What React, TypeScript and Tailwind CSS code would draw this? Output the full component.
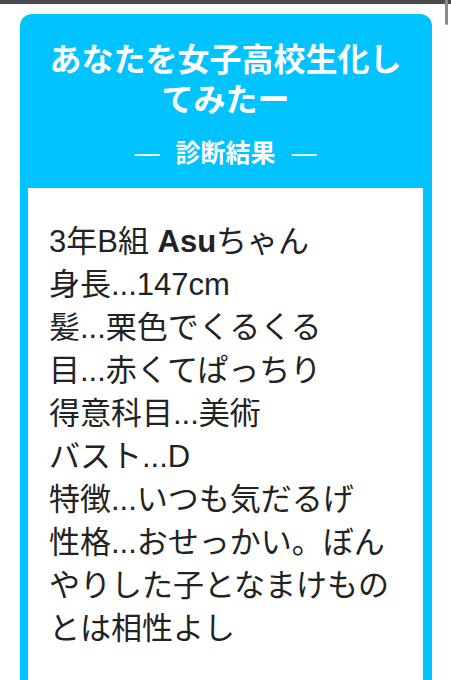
import React from "react"

const lines: React.ReactNode[] = [
  <>3年B組 <span className="font-bold">Asu</span>ちゃん</>,
  "身長...147cm",
  "髪...栗色でくるくる",
  "目...赤くてぱっちり",
  "得意科目...美術",
  "バスト...D",
  "特徴...いつも気だるげ",
  "性格...おせっかい。ぼんやりした子となまけものとは相性よし",
]

export default function App() {
  return (
    <div className="relative min-h-[680px] bg-white overflow-hidden font-['Liberation_Sans','Noto_Sans_CJK_JP',sans-serif]">
      {/* top strip + scroll thumb */}
      <div className="h-[4px] bg-[#4b4b4b]" />
      <div className="absolute right-[3px] top-0 w-[3px] h-[25px] rounded-b-full bg-[#8a8a8a]" />

      <div className="pt-[10px] pl-[20px] pr-[19px]">
        <div className="rounded-t-[12px] bg-[#00c3ff] px-[8px] pr-[9px]">
          <div className="px-[12px] pt-[26px] text-center text-white">
            <h1 className="text-[32px] leading-[40px] font-bold">あなたを女子高校生化してみたー</h1>
            <div className="mt-[18px] flex items-center justify-center gap-[16px] text-[25px] leading-[30px]">
              <span className="font-normal">—</span>
              <span className="font-bold">診断結果</span>
              <span className="font-normal">—</span>
            </div>
          </div>
          <div className="mt-[20px] bg-white pl-[21px] pr-[22px] pt-[32px] pb-[60px] text-[31px] leading-[43px] text-[#222]">
            {lines.map((l, i) => (
              <div key={i}>{l}</div>
            ))}
          </div>
        </div>
      </div>
    </div>
  )
}
